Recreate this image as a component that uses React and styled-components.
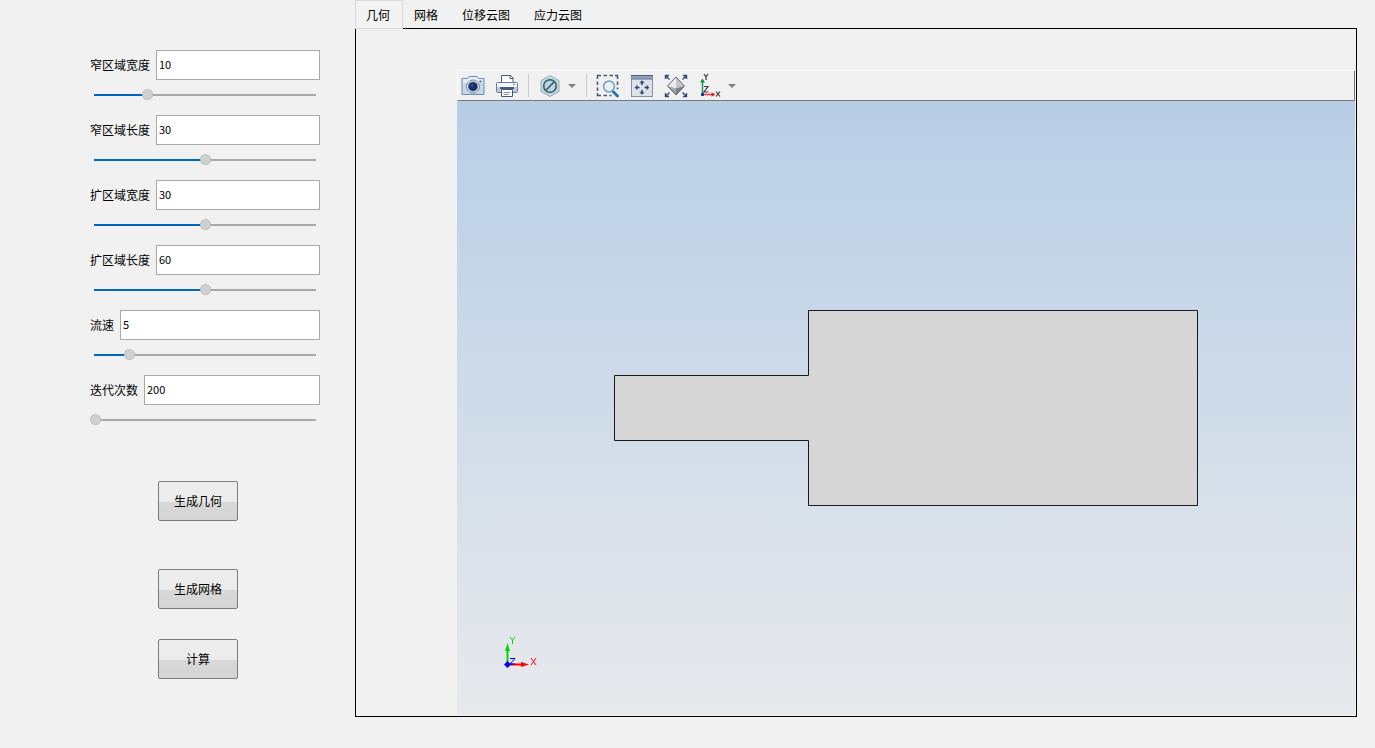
import React, { useState } from "react";
import styled, { createGlobalStyle } from "styled-components";

const GlobalStyle = createGlobalStyle`
  * { box-sizing: border-box; }
  body {
    margin: 0;
    background: #f1f1f1;
    color: #000;
    font-family: "Noto Sans CJK SC", "Liberation Sans", sans-serif;
    font-size: 12px;
    line-height: 16px;
  }
  button, input { font: inherit; color: inherit; }
`;

const Page = styled.div`
  display: flex;
  min-height: 100vh;
`;

const Sidebar = styled.aside`
  flex: 0 0 355px;
  padding: 50px 35px 0 90px;
`;

const Form = styled.form`
  display: flex;
  flex-direction: column;
  gap: 14px;
`;

const FieldLine = styled.div`
  display: flex;
  align-items: center;
  gap: 6px;
  height: 30px;
`;

const FieldLabel = styled.label`
  flex: none;
  white-space: nowrap;
`;

const TextBox = styled.input`
  flex: 1;
  min-width: 0;
  height: 30px;
  padding: 0 2px 2px;
  border: 1px solid #a9a9a9;
  background: #fff;
  font-size: 11px;
  outline: none;
`;

const Slider = styled.input`
  appearance: none;
  display: block;
  width: 100%;
  height: 12px;
  margin: 9px 0 0;
  background: transparent;

  &::-webkit-slider-runnable-track {
    height: 12px;
    background: linear-gradient(to right, #0067c0 var(--fill), #a8a8a8 var(--fill))
      center / calc(100% - 8px) 2px no-repeat;
  }

  &::-webkit-slider-thumb {
    appearance: none;
    width: 11px;
    height: 11px;
    border: 1px dotted #b0b0b0;
    border-radius: 50%;
    background: #d0d0d0;
  }
`;

const Actions = styled.div`
  display: flex;
  flex-direction: column;
  align-items: flex-start;
  gap: 30px;
  margin: 55px 0 0 68px;
`;

const ActionButton = styled.button`
  width: 80px;
  height: 40px;
  padding: 0;
  margin-bottom: ${(p) => (p.$spaced ? "18px" : "0")};
  border: 1px solid #7b7b7b;
  border-radius: 2px;
  background: linear-gradient(#ededed 0%, #ebebeb 52%, #d8d8d8 52%, #d5d5d5 100%);
`;

const Main = styled.main`
  flex: 1;
  min-width: 0;
  display: flex;
  flex-direction: column;
  padding: 0 18px 31px 0;
`;

const TabList = styled.div`
  display: flex;
  height: 28px;
`;

const Tab = styled.button`
  position: relative;
  height: 29px;
  padding: 0 12px 0 10px;
  border: 1px solid ${(p) => (p.$active ? "#d9d9d9" : "transparent")};
  background: ${(p) => (p.$active ? "#f3f3f3" : "transparent")};
`;

const TabPanel = styled.section`
  flex: 1;
  display: flex;
  border: 1px solid #000;
  padding: 41px 1px 1px 101px;
`;

const Viewer = styled.div`
  flex: 1;
  min-width: 0;
  display: flex;
  flex-direction: column;
`;

const Toolbar = styled.div`
  display: flex;
  align-items: center;
  height: 31px;
  padding-left: 3px;
  border: 1px solid #fff;
  border-right-color: #787878;
  border-bottom-color: #787878;
`;

const ToolGroup = styled.div`
  display: flex;
  gap: 10px;
`;

const SplitTool = styled.div`
  display: flex;
  gap: 5px;
`;

const ToolButton = styled.button`
  width: ${(p) => (p.$narrow ? "10px" : "24px")};
  height: 27px;
  padding: 0;
  border: 0;
  background: transparent;
  display: flex;
  align-items: center;
  justify-content: center;

  svg { flex: none; display: block; }
`;

const Divider = styled.span`
  width: 1px;
  height: 23px;
  margin: 0 9px;
  background: #cbcbcb;
`;

const Canvas = styled.div`
  position: relative;
  flex: 1;
  display: flex;
  align-items: center;
  justify-content: center;
  background: linear-gradient(#b8cee6, #e8e9ec);
`;

const Triad = styled.svg`
  position: absolute;
  left: 45px;
  bottom: 43px;
`;

const CameraIcon = () => (
  <svg width="24" height="24" viewBox="0 0 24 24">
    <path d="M1 4.500h5l2-2h8l2 2h5v16H1z" fill="#c5d9ee" stroke="#7288ac" />
    <path d="M2 5h5l2-2h6l2 2h5v4H2z" fill="#e3eef8" />
    <circle cx="12" cy="12.500" r="6.500" fill="#f0f4fa" stroke="#6a83a8" />
    <circle cx="12" cy="12.500" r="4.600" fill="#1b2d60" stroke="#4a6390" strokeWidth="0.800" />
    <circle cx="11" cy="11.500" r="1.500" fill="#33508a" />
    <path d="M18.500 7.500h2" stroke="#34486f" strokeWidth="1.500" />
  </svg>
);

const PrinterIcon = () => (
  <svg width="24" height="24" viewBox="0 0 24 24" stroke="#4a587c">
    <path d="M6.500 9V1.500h9l2.500 2.500v5" fill="#fff" />
    <path d="M15 1.500V4.500h3" fill="none" />
    <rect x="1.500" y="8.500" width="21" height="10" rx="1" fill="#f4f5f9" stroke="#6c7998" />
    <path d="M2 13h20v5H2z" fill="#c3cbdb" stroke="none" />
    <path d="M5 14h14" strokeWidth="2" />
    <path d="M6.500 15.500h11v7h-11z" fill="#fff" />
    <path d="M8.500 18.500h7M8.500 20.500h5" stroke="#8693ae" />
    <path d="M18 10.500h2" stroke="#7687a8" />
  </svg>
);

const HexagonIcon = () => (
  <svg width="24" height="24" viewBox="0 0 24 24">
    <path d="M12 1.500l9 5v11l-9 5-9-5v-11z" fill="#b8cfd5" stroke="#94b0b8" />
    <path d="M12 3l7.500 4.300v9.400L12 21l-7.500-4.300V7.300z" fill="none" stroke="#d5e4e7" strokeWidth="0.800" />
    <circle cx="12" cy="12" r="6.300" fill="#c0d5da" stroke="#315f72" strokeWidth="1.600" />
    <path d="M7.700 16.500L16.500 7.500" stroke="#315f72" strokeWidth="1.600" />
  </svg>
);

const ZoomBoxIcon = () => (
  <svg width="24" height="24" viewBox="0 0 24 24" fill="none">
    <path
      d="M1.500 5V1.500H5M7.500 1.500h3.500M13.500 1.500h3.500M19 1.500h2.500V5M21.500 7.500V11M21.500 13.500v2M1.500 7.500V11M1.500 13.500V17M1.500 19v2.500H5M7.500 21.500h3.500M13.500 21.500h2"
      stroke="#46537a"
      strokeWidth="1.500"
    />
    <path d="M17 17.500l4.500 4.500" stroke="#2172b0" strokeWidth="2.800" strokeLinecap="round" />
    <circle cx="13" cy="12.500" r="5.400" fill="#e6f0f6" stroke="#76a5c4" strokeWidth="1.600" />
    <path d="M10 12c.5-2 2-3 4-2.500" stroke="#fff" strokeWidth="1.500" />
  </svg>
);

const FitIcon = () => (
  <svg width="24" height="24" viewBox="0 0 24 24">
    <rect x="1.500" y="1.500" width="21" height="21" fill="#dce2eb" stroke="#8290aa" />
    <path d="M2 2h20v3H2z" fill="#91a1bf" />
    <path d="M1 1.500h22" stroke="#4a5b82" />
    <path d="M2 5h20" stroke="#5f7095" />
    <g fill="#2e4068" stroke="#2e4068">
      <path d="M12 6.500l2.200 2.200H9.800zM12 20.500l2.200-2.200H9.800zM5 13.500l2.200-2.200v4.400zM19 13.500l-2.200-2.200v4.400z" strokeWidth="0.400" />
      <path d="M12 8.500V11M12 16v2.500M7 13.500h2.500M14.500 13.500H17" strokeWidth="1.600" />
    </g>
  </svg>
);

const RotateViewIcon = () => (
  <svg width="24" height="24" viewBox="0 0 24 24">
    <path d="M12 3l8.500 9-8.500 9-8.500-9z" fill="#c5c7cb" />
    <path d="M12 3v11.500L3.500 12z" fill="#eceded" />
    <path d="M3.500 12l8.500 2.500V21z" fill="#a2a5ab" />
    <path d="M12 21v-6.500l8.500-2.500z" fill="#7d8189" />
    <path d="M12 3l8.500 9-8.500 9-8.500-9z" fill="none" stroke="#63676f" />
    <g stroke="#344873" strokeWidth="1.400" fill="none">
      <path d="M5.500 5.500L2 2M1.500 5V1.500H5M18.500 5.500L22 2M19 1.500h3.500V5M5.500 18.500L2 22M1.500 19v3.500H5M18.500 18.500L22 22M22.500 19v3.500H19" />
    </g>
  </svg>
);

const AxesIcon = () => (
  <svg width="24" height="26" viewBox="0 0 24 26">
    <path d="M4.500 21V8" stroke="#26975a" strokeWidth="1.500" />
    <path d="M4.500 5.500l2.500 4H2z" fill="#168747" />
    <path d="M5 21.500h10" stroke="#ed4040" strokeWidth="1.500" />
    <path d="M17.500 21.500l-4-2.300v4.600z" fill="#e22020" />
    <rect x="3" y="20" width="3" height="3" fill="#173f9c" />
    <g fill="none" stroke="#3a3a3a" strokeWidth="1.200">
      <path d="M6 1l2 3 2-3M8 4v3M6 13.500h4l-4 5.500h4.500M18 18.500l4 5M22 18.500l-4 5" />
    </g>
  </svg>
);

const CaretIcon = () => (
  <svg width="8" height="4" viewBox="0 0 8 4">
    <path d="M0 0h8L4 4z" fill="#808080" />
  </svg>
);

const FIELDS = [
  { id: "narrow-width", label: "窄区域宽度", value: 10, min: 5, max: 26 },
  { id: "narrow-length", label: "窄区域长度", value: 30, min: 10, max: 50 },
  { id: "wide-width", label: "扩区域宽度", value: 30, min: 10, max: 50 },
  { id: "wide-length", label: "扩区域长度", value: 60, min: 20, max: 100 },
  { id: "velocity", label: "流速", value: 5, min: 1, max: 27 },
  { id: "iterations", label: "迭代次数", value: 200, min: 200, max: 1000 },
];

const TABS = ["几何", "网格", "位移云图", "应力云图"];

function Field({ id, label, value: initial, min, max }) {
  const [value, setValue] = useState(initial);
  const fill = ((value - min) / (max - min)) * 100;
  const change = (e) => setValue(e.target.value);
  return (
    <div>
      <FieldLine>
        <FieldLabel htmlFor={id}>{label}</FieldLabel>
        <TextBox id={id} type="text" value={value} onChange={change} />
      </FieldLine>
      <Slider
        type="range"
        aria-label={label}
        min={min}
        max={max}
        value={value}
        onChange={change}
        style={{ "--fill": `${fill}%` }}
      />
    </div>
  );
}

export default function App() {
  const [tab, setTab] = useState(TABS[0]);
  return (
    <>
      <GlobalStyle />
      <Page>
        <Sidebar>
          <Form>
            {FIELDS.map((f) => (
              <Field key={f.id} {...f} />
            ))}
          </Form>
          <Actions>
            <ActionButton type="button" $spaced>生成几何</ActionButton>
            <ActionButton type="button">生成网格</ActionButton>
            <ActionButton type="button">计算</ActionButton>
          </Actions>
        </Sidebar>
        <Main>
          <TabList role="tablist">
            {TABS.map((name) => (
              <Tab
                key={name}
                type="button"
                role="tab"
                aria-selected={name === tab}
                $active={name === tab}
                onClick={() => setTab(name)}
              >
                {name}
              </Tab>
            ))}
          </TabList>
          <TabPanel role="tabpanel" aria-label={tab}>
            <Viewer>
              <Toolbar role="toolbar">
                <ToolGroup>
                  <ToolButton type="button" aria-label="截图"><CameraIcon /></ToolButton>
                  <ToolButton type="button" aria-label="打印"><PrinterIcon /></ToolButton>
                </ToolGroup>
                <Divider />
                <SplitTool>
                  <ToolButton type="button" aria-label="显示"><HexagonIcon /></ToolButton>
                  <ToolButton type="button" aria-label="显示选项" $narrow><CaretIcon /></ToolButton>
                </SplitTool>
                <Divider />
                <ToolGroup>
                  <ToolButton type="button" aria-label="框选缩放"><ZoomBoxIcon /></ToolButton>
                  <ToolButton type="button" aria-label="适应窗口"><FitIcon /></ToolButton>
                  <ToolButton type="button" aria-label="旋转视图"><RotateViewIcon /></ToolButton>
                  <SplitTool>
                    <ToolButton type="button" aria-label="坐标视图"><AxesIcon /></ToolButton>
                    <ToolButton type="button" aria-label="视图选项" $narrow><CaretIcon /></ToolButton>
                  </SplitTool>
                </ToolGroup>
              </Toolbar>
              <Canvas>
                <svg width="584" height="196" viewBox="0 0 584 196" role="img" aria-label="几何模型">
                  <path
                    d="M.5 65.500H194.500V.5H583.500V195.500H194.500V130.500H.5z"
                    fill="#d6d6d6"
                    stroke="#1a1a1a"
                  />
                </svg>
                <Triad width="36" height="36" viewBox="0 0 36 36" fill="none">
                  <path d="M5.500 31V14" stroke="#00d800" strokeWidth="2" />
                  <path d="M5.500 7l2.500 8H3z" fill="#00d800" />
                  <path d="M6 28.500h14" stroke="#f00" strokeWidth="2" />
                  <path d="M27 28.500l-8-2.500v5z" fill="#f00" />
                  <path d="M5.500 25l3.500 3.500L5.500 32 2 28.500z" fill="#00f" />
                  <path d="M8 1l2.500 3L13 1M10.500 4v4" stroke="#00d800" />
                  <path d="M8 22.500h5L8 28h5" stroke="#00f" />
                  <path d="M29 22l5 7M34 22l-5 7" stroke="#f00" />
                </Triad>
              </Canvas>
            </Viewer>
          </TabPanel>
        </Main>
      </Page>
    </>
  );
}
